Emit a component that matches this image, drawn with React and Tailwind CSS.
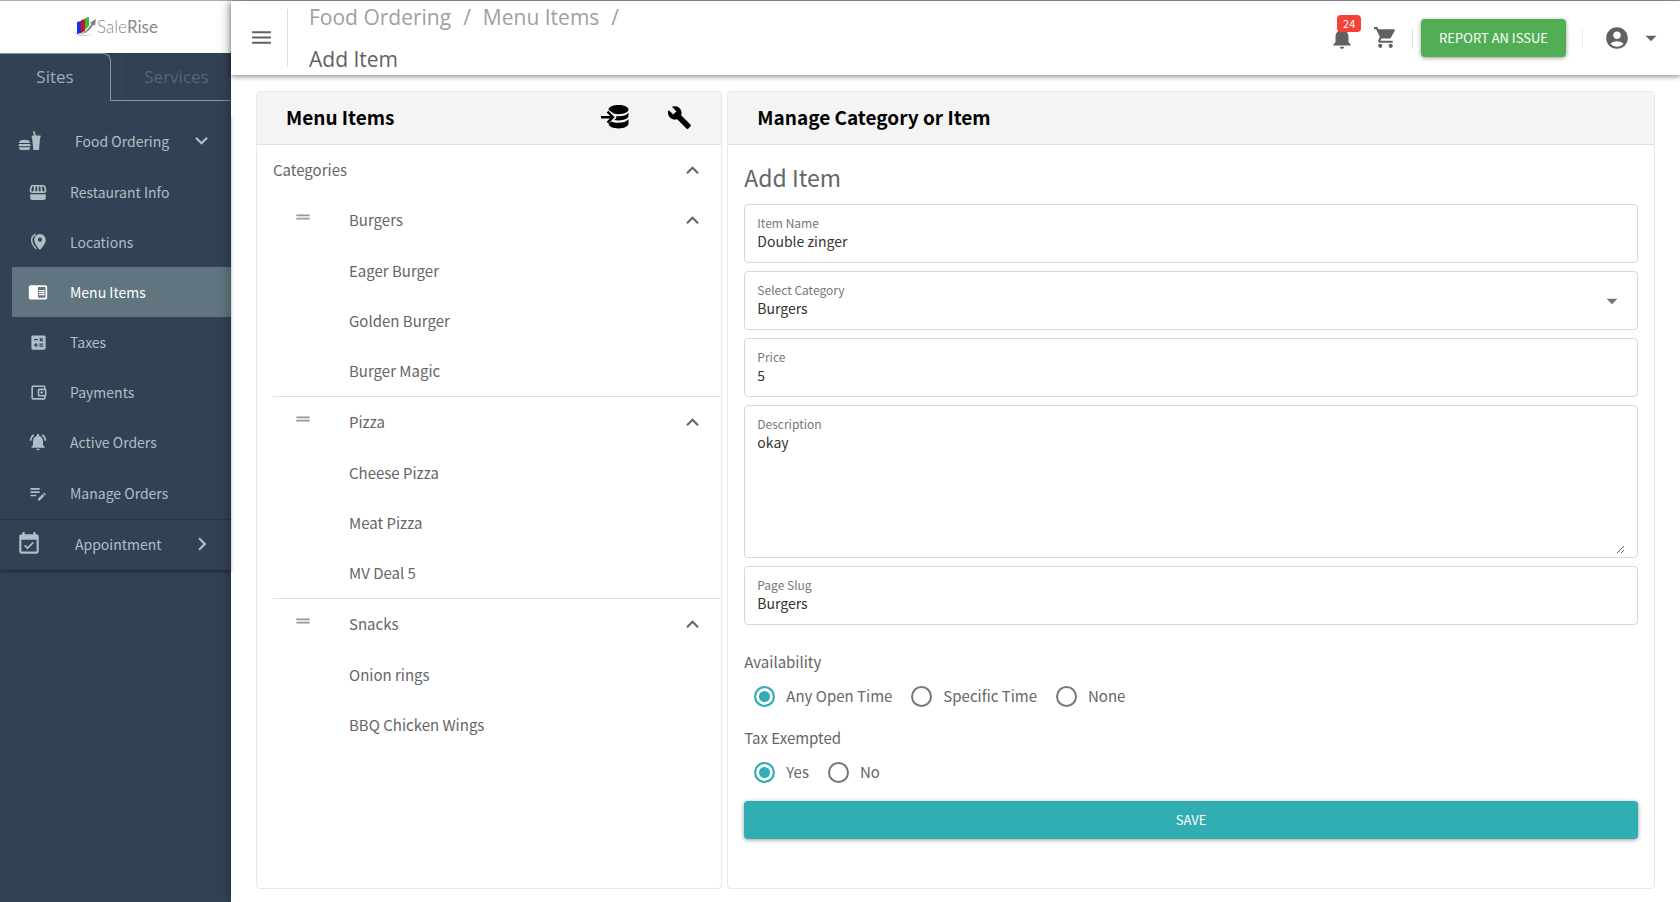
import React, { useState } from 'react';
import {
  MdAccountCircle,
  MdArrowDropDown,
  MdBuild,
  MdCalculate,
  MdChevronRight,
  MdChromeReaderMode,
  MdDragHandle,
  MdEditNote,
  MdEventAvailable,
  MdExpandLess,
  MdExpandMore,
  MdMenu,
  MdNotifications,
  MdNotificationsActive,
  MdOutlineAccountBalanceWallet,
  MdShoppingCart,
} from 'react-icons/md';

const FoodIcon = () => (
  <svg className="h-6 w-6" viewBox="0 0 24 24" fill="currentColor">
    <path d="M1 14C1 11.800 3 10.800 6.500 10.800S12 11.800 12 14z" />
    <rect x="0.500" y="15" width="12" height="2.200" rx="1" />
    <path d="M1 18.200h11v.800a2 2 0 0 1-2 2H3a2 2 0 0 1-2-2z" />
    <path d="M13.600 6.400h2.600L14.900 2.600l1.500-.600 1.600 4.400h4.600v2h-.500L21 21h-5.700L14.100 8.400h-.500z" />
  </svg>
);

const StoreIcon = () => (
  <svg className="h-[18px] w-[18px]" viewBox="0 0 18 18" fill="currentColor">
    <path
      fillRule="evenodd"
      d="M3.500 2h11a2 2 0 0 1 1.900 1.300l1 4A2.600 2.600 0 0 1 14.800 10H3.200A2.600 2.600 0 0 1 .600 7.300l1-4A2 2 0 0 1 3.500 2zm-.300 1.500L2.300 7.600c0 1.300 2 1.300 2.300 0l.400-4.100zm3.400 0-.300 4.100c0 1.200 1.900 1.200 1.900 0V3.500zm3.200 0v4.100c0 1.200 1.900 1.200 1.900 0l-.300-4.100zm3.200 0 .400 4.100c.3 1.300 2.300 1.300 2.300 0l-.900-4.100z"
    />
    <path d="M1.200 11.200h15.600V15a2 2 0 0 1-2 2H3.200a2 2 0 0 1-2-2z" />
  </svg>
);

const PinIcon = () => (
  <svg className="h-[18px] w-[18px]" viewBox="0 0 18 18" fill="currentColor">
    <path d="M11 1a5.800 5.800 0 0 0-5.800 5.900C5.200 11 11 17 11 17s5.800-6 5.800-10.100A5.800 5.800 0 0 0 11 1zm0 7.800a2.100 2.100 0 1 1 0-4.200 2.100 2.100 0 0 1 0 4.200z" />
    <path
      d="M6.500 1.500C1 4 1.500 10 7.500 16"
      fill="none"
      stroke="currentColor"
      strokeWidth="1.400"
    />
  </svg>
);

const DatabaseIcon = () => (
  <svg className="h-7 w-7" viewBox="0 0 28 28" fill="currentColor">
    <path d="M7.500 6.500C7.500 3.800 12 2 17.500 2s10 1.800 10 4.500-4.500 4.700-10 4.700c-1.700 0-3.300-.200-4.700-.600L8.500 7.600z" />
    <path d="M27.500 9.800v3c0 2.700-4.500 4.700-10 4.700-1.500 0-3-.200-4.200-.400l2.400-2.600-1.200-1.400c5.500.7 11-.200 13-3.300z" />
    <path d="M27.500 16.300v4.200c0 3-4.500 4.900-10 4.900-5.300 0-9.500-1.700-10-4.600l2.400-2.300c5.400 2.300 14.600 1.800 17.600-2.200z" />
    <path
      d="M0 14.200h11M6.500 8.700l5.500 5.500-5.500 5.500"
      fill="none"
      stroke="currentColor"
      strokeWidth="2.400"
    />
  </svg>
);

const Logo = () => (
  <a href="#" aria-label="SaleRise" className="flex items-center text-[#888]">
    <svg className="h-5 w-6" viewBox="0 0 24 20">
      <path d="M1 12c1 6 9 7 19 5-8 3-19 3-19-5z" fill="#bbb" />
      <path d="M4 5l4-1v12l-4 1z" fill="#1a2cf0" />
      <path d="M8 3l4-1v12l-4 2z" fill="#d0141c" />
      <path d="M12 1l4-1v9l-4 4z" fill="#2fbf3a" />
      <path d="M7 17C13 15 16 11 18.500 6.500L16.500 6 23 2l-1 7-1.800-1.200C17 13 13 17 7 17z" fill="#808080" />
    </svg>
    <span className="font-['Lato',sans-serif] text-[17px] leading-6 font-light">
      Sale<span className="font-normal">Rise</span>
    </span>
  </a>
);

const siteLinks = [
  { name: 'Restaurant Info', icon: <StoreIcon /> },
  { name: 'Locations', icon: <PinIcon /> },
  { name: 'Menu Items', icon: <MdChromeReaderMode size={20} />, active: true },
  { name: 'Taxes', icon: <MdCalculate size={19} /> },
  { name: 'Payments', icon: <MdOutlineAccountBalanceWallet size={19} /> },
  { name: 'Active Orders', icon: <MdNotificationsActive size={20} /> },
  { name: 'Manage Orders', icon: <MdEditNote size={22} /> },
];

const categories = [
  { name: 'Burgers', items: ['Eager Burger', 'Golden Burger', 'Burger Magic'] },
  { name: 'Pizza', items: ['Cheese Pizza', 'Meat Pizza', 'MV Deal 5'] },
  { name: 'Snacks', items: ['Onion rings', 'BBQ Chicken Wings'] },
];

function Sidebar() {
  return (
    <aside className="flex w-[231px] shrink-0 flex-col bg-[#324254] text-[#b0bec5]">
      <div className="flex h-[52px] items-center justify-center bg-white">
        <Logo />
      </div>
      <div className="flex h-12 font-['Open_Sans',sans-serif] text-[17px]">
        <button className="w-[111px] rounded-tr-lg border-t border-r border-[#8496a3] pb-0.5 text-[#9fb0ba]">
          Sites
        </button>
        <div className="flex flex-1 border-b border-[#8496a3] pl-2.5">
          <button className="flex-1 rounded-tl-lg border-l border-[#3a4a5c] text-[#53667a]">
            Services
          </button>
        </div>
      </div>
      <nav className="mt-3.5 border-t border-[#2d3c4d] text-sm shadow-[0_2px_3px_rgba(0,0,0,0.35)]">
        <button className="flex h-[51px] w-full items-center pb-0.5 pl-[18px]">
          <FoodIcon />
          <span className="ml-[33px] w-[114px] text-left">Food Ordering</span>
          <MdExpandMore size={25} />
        </button>
        <ul className="grid h-[352px]">
          {siteLinks.map((link) => (
            <li key={link.name} className="pl-3">
              <a
                href="#"
                className={`flex h-full items-center pl-4 ${
                  link.active ? 'bg-[#607580] text-white' : ''
                }`}
              >
                <span className="flex w-5 justify-center">{link.icon}</span>
                <span className="ml-[22px]">{link.name}</span>
              </a>
            </li>
          ))}
        </ul>
        <button className="flex h-[51px] w-full items-center border-t border-[#28374a] pb-0.5 pl-4">
          <MdEventAvailable size={26} />
          <span className="ml-[33px] w-[114px] text-left">Appointment</span>
          <MdChevronRight size={26} />
        </button>
      </nav>
    </aside>
  );
}

function Header() {
  return (
    <header className="relative z-10 flex h-[74px] shrink-0 items-center bg-white pr-4 pb-px text-[#616161] shadow-[0_2px_5px_rgba(0,0,0,0.4)]">
      <button aria-label="Toggle menu" className="ml-[18px]">
        <MdMenu size={25} />
      </button>
      <div className="ml-[13px] h-[58px] border-l border-[#ddd]" />
      <nav
        aria-label="Breadcrumb"
        className="ml-[21px] font-['Open_Sans',sans-serif] text-[21px] leading-[42px]"
      >
        <div className="flex gap-3 text-[#a0a0a0]">
          <a href="#">Food Ordering</a>
          <span>/</span>
          <a href="#">Menu Items</a>
          <span>/</span>
        </div>
        <div>Add Item</div>
      </nav>
      <div className="ml-auto flex items-center">
        <button aria-label="Notifications" className="relative">
          <MdNotifications size={26} />
          <span className="absolute -top-2.5 left-2 rounded bg-[#f44336] px-1.5 text-[11px] leading-[17px] text-white">
            24
          </span>
        </button>
        <button aria-label="Cart" className="ml-[18px]">
          <MdShoppingCart size={25} />
        </button>
        <div className="ml-3.5 h-5 border-l border-[#e0e0e0]" />
        <button className="ml-2 h-[38px] rounded bg-[#52ae55] px-[18px] text-[13px] text-white shadow-[0_1px_4px_rgba(0,0,0,0.4)]">
          REPORT AN ISSUE
        </button>
        <div className="ml-4 h-5 border-l border-[#eee]" />
        <button aria-label="Account" className="ml-[21px] flex items-center gap-2">
          <MdAccountCircle size={26} />
          <MdArrowDropDown size={26} />
        </button>
      </div>
    </header>
  );
}

function Panel({ title, actions, className, children }) {
  return (
    <section className={`flex flex-col rounded border border-[#e8e8e8] bg-white ${className}`}>
      <div className="flex h-[53px] shrink-0 items-center justify-between rounded-t border-b border-[#e0e0e0] bg-[#f4f4f4] pr-[29px] pb-0.5 pl-[29px]">
        <h2 className="text-[19px] font-bold text-black">{title}</h2>
        {actions}
      </div>
      {children}
    </section>
  );
}

function MenuTree() {
  return (
    <div className="pl-4 text-[15px]">
      <button className="flex h-[50px] w-full items-center justify-between pr-4">
        Categories
        <MdExpandLess size={25} />
      </button>
      {categories.map((category) => (
        <div key={category.name} className="border-b border-[#e0e0e0] last:border-b-0">
          <button className="flex h-[51px] w-full items-center pr-4">
            <MdDragHandle size={20} className="mb-2 ml-5 text-[#999]" />
            <span className="ml-9 flex-1 text-left">{category.name}</span>
            <MdExpandLess size={25} />
          </button>
          <ul>
            {category.items.map((item) => (
              <li key={item} className="flex h-[50px] items-center pl-[76px]">
                {item}
              </li>
            ))}
          </ul>
        </div>
      ))}
    </div>
  );
}

const fieldClass = 'w-full bg-transparent text-sm leading-5 text-[#333] outline-none';

function Field({ label, id, children }) {
  return (
    <div className="relative rounded border border-[#d8d8d8] px-3 pt-2.5 pb-[11px]">
      <label htmlFor={id} className="block text-xs leading-4 text-[#777]">
        {label}
      </label>
      {children}
    </div>
  );
}

function RadioGroup({ legend, name, options, value, onChange }) {
  return (
    <fieldset>
      <legend className="text-[15px] leading-6">{legend}</legend>
      <div className="flex h-11 items-center gap-[19px] pl-2.5">
        {options.map((option) => (
          <label key={option} className="flex items-center gap-[11px] text-[15px]">
            <input
              type="radio"
              name={name}
              checked={value === option}
              onChange={() => onChange(option)}
              className="h-[21px] w-[21px] appearance-none rounded-full border-2 border-[#777] checked:border-[#31adb4] checked:bg-[#31adb4] checked:shadow-[inset_0_0_0_3px_#fff]"
            />
            {option}
          </label>
        ))}
      </div>
    </fieldset>
  );
}

function ItemForm() {
  const [availability, setAvailability] = useState('Any Open Time');
  const [taxExempted, setTaxExempted] = useState('Yes');

  return (
    <form className="px-4 pt-3" onSubmit={(e) => e.preventDefault()}>
      <h3 className="mb-[7px] text-[23px] leading-10">Add Item</h3>
      <div className="flex flex-col gap-2">
        <Field label="Item Name" id="item-name">
          <input id="item-name" type="text" defaultValue="Double zinger" className={`${fieldClass} block h-5`} />
        </Field>
        <Field label="Select Category" id="category">
          <select id="category" defaultValue="Burgers" className={`${fieldClass} block h-5 appearance-none`}>
            {categories.map((category) => (
              <option key={category.name}>{category.name}</option>
            ))}
          </select>
          <MdArrowDropDown size={26} className="pointer-events-none absolute top-4 right-3 text-[#777]" />
        </Field>
        <Field label="Price" id="price">
          <input id="price" type="text" defaultValue="5" className={`${fieldClass} block h-5`} />
        </Field>
        <Field label="Description" id="description">
          <textarea id="description" defaultValue="okay" className={`${fieldClass} -mb-2 block h-[122px] resize`} />
        </Field>
        <Field label="Page Slug" id="page-slug">
          <input id="page-slug" type="text" defaultValue="Burgers" className={`${fieldClass} block h-5`} />
        </Field>
      </div>
      <div className="mt-[25px] flex flex-col gap-2">
        <RadioGroup
          legend="Availability"
          name="availability"
          options={['Any Open Time', 'Specific Time', 'None']}
          value={availability}
          onChange={setAvailability}
        />
        <RadioGroup
          legend="Tax Exempted"
          name="tax-exempted"
          options={['Yes', 'No']}
          value={taxExempted}
          onChange={setTaxExempted}
        />
      </div>
      <button
        type="submit"
        className="mt-[7px] mb-12 h-[38px] w-full rounded-sm bg-[#31adb4] text-[13px] text-white shadow-[0_1px_4px_rgba(0,0,0,0.4)]"
      >
        SAVE
      </button>
    </form>
  );
}

export default function App() {
  return (
    <div className="flex min-h-screen border-t border-[#a9a9b8] bg-white font-['Noto_Sans_CJK_SC',sans-serif] text-[#666]">
      <Sidebar />
      <div className="flex min-w-0 flex-1 flex-col shadow-[0_0_12px_rgba(0,0,0,0.4)]">
        <Header />
        <main className="flex flex-1 gap-[5px] pt-4 pr-[25px] pb-[13px] pl-[25px]">
          <Panel
            title="Menu Items"
            className="w-1/3 shrink-0"
            actions={
              <div className="flex items-center gap-[38px] text-black">
                <button aria-label="Import items">
                  <DatabaseIcon />
                </button>
                <button aria-label="Settings">
                  <MdBuild size={25} />
                </button>
              </div>
            }
          >
            <MenuTree />
          </Panel>
          <Panel title="Manage Category or Item" className="min-w-0 flex-1">
            <ItemForm />
          </Panel>
        </main>
      </div>
    </div>
  );
}
